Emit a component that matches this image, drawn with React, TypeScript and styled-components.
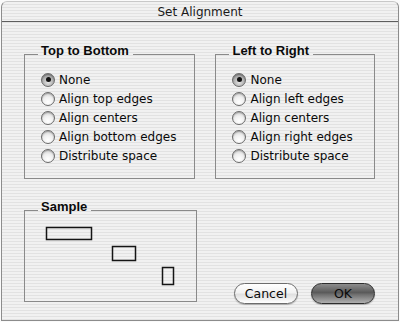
import styled, { createGlobalStyle } from "styled-components";

const GlobalStyle = createGlobalStyle`
  html, body {
    margin: 0;
    padding: 0;
    background: #ffffff;
  }
  body {
    font-family: "DejaVu Sans", "Liberation Sans", sans-serif;
    color: #0a0a0a;
  }
`;

const stripes = `repeating-linear-gradient(
  to bottom,
  #f1f1f1 0px,
  #f1f1f1 2px,
  #e2e2e2 2px,
  #e2e2e2 3px
)`;

const Screen = styled.div`
  width: 400px;
  height: 322px;
  box-sizing: border-box;
  padding: 1px;
  background: #fafafa;
`;

const Window = styled.div`
  height: 100%;
  box-sizing: border-box;
  border: 1px solid #8c8c8c;
  border-top-color: #c8c8c8;
  border-radius: 6px 6px 0 0;
  background: ${stripes};
  display: flex;
  flex-direction: column;
  overflow: hidden;
`;

const TitleBar = styled.div`
  height: 19px;
  flex: none;
  border-bottom: 1px solid #5e5e5e;
  display: flex;
  align-items: center;
  justify-content: center;
  font-size: 12px;
  color: #1a1a1a;
`;

const Body = styled.div`
  flex: 1;
  display: flex;
  flex-direction: column;
  padding: 22px 23px 16px 22px;
  gap: 21px;
`;

const Row = styled.div`
  display: flex;
  align-items: flex-start;
  gap: 20px;
`;

const BottomRow = styled.div`
  display: flex;
  align-items: flex-end;
  justify-content: space-between;
`;

const Group = styled.fieldset<{ $width: number; $height: number; $lift?: number }>`
  margin: 0 0 ${(p) => p.$lift ?? 0}px 0;
  box-sizing: border-box;
  width: ${(p) => p.$width}px;
  height: ${(p) => p.$height}px;
  border: 1px solid #8a8a8a;
  padding: 0;
  min-width: 0;
`;

const Legend = styled.legend`
  font-family: "Liberation Sans", "DejaVu Sans", sans-serif;
  font-weight: bold;
  font-size: 13px;
  line-height: 14px;
  padding: 0 4px 6px 3px;
  margin-left: 13px;
  color: #0a0a0a;
`;

const OptionList = styled.div`
  display: flex;
  flex-direction: column;
  padding: 6px 10px 0 16px;
`;

const Option = styled.label`
  display: flex;
  align-items: center;
  gap: 4px;
  height: 19px;
  font-size: 12px;
  white-space: nowrap;
`;

const Radio = styled.span<{ $checked?: boolean }>`
  width: 14px;
  height: 14px;
  box-sizing: border-box;
  border-radius: 50%;
  border: 1px solid #6a6a6a;
  flex: none;
  display: flex;
  align-items: center;
  justify-content: center;
  background: ${(p) =>
    p.$checked
      ? "radial-gradient(circle at 50% 70%, #e4e4e4 0%, #a9a9a9 60%, #7c7c7c 100%)"
      : "radial-gradient(circle at 50% 75%, #ffffff 0%, #f0f0f0 45%, #c4c4c4 100%)"};
  box-shadow: inset 0 1px 1px rgba(0, 0, 0, 0.25);

  &::after {
    content: "";
    display: ${(p) => (p.$checked ? "block" : "none")};
    width: 5px;
    height: 5px;
    border-radius: 50%;
    background: #111;
  }
`;

const SampleCanvas = styled.svg`
  display: block;
`;

const Buttons = styled.div`
  display: flex;
  gap: 13px;
`;

const Button = styled.button<{ $default?: boolean }>`
  width: 64px;
  height: 21px;
  box-sizing: border-box;
  border-radius: 11px;
  border: 1px solid ${(p) => (p.$default ? "#2e2e2e" : "#6c6c6c")};
  font-family: inherit;
  font-size: 12.5px;
  color: #0a0a0a;
  padding: 0;
  display: flex;
  align-items: center;
  justify-content: center;
  background: ${(p) =>
    p.$default
      ? "linear-gradient(to bottom, #8d8d8d 0%, #5a5a5a 45%, #6e6e6e 55%, #b0b0b0 100%)"
      : "linear-gradient(to bottom, #ffffff 0%, #f2f2f2 45%, #e0e0e0 55%, #ffffff 100%)"};
  box-shadow: 0 1px 1px rgba(0, 0, 0, 0.25);
`;

const topToBottom = [
  "None",
  "Align top edges",
  "Align centers",
  "Align bottom edges",
  "Distribute space",
];

const leftToRight = [
  "None",
  "Align left edges",
  "Align centers",
  "Align right edges",
  "Distribute space",
];

function RadioGroup({
  title,
  options,
  width,
}: {
  title: string;
  options: string[];
  width: number;
}) {
  return (
    <Group $width={width} $height={135}>
      <Legend>{title}</Legend>
      <OptionList>
        {options.map((o, i) => (
          <Option key={o}>
            <Radio $checked={i === 0} />
            {o}
          </Option>
        ))}
      </OptionList>
    </Group>
  );
}

export default function App() {
  return (
    <>
      <GlobalStyle />
      <Screen>
        <Window>
          <TitleBar>Set Alignment</TitleBar>
          <Body>
            <Row>
              <RadioGroup title="Top to Bottom" options={topToBottom} width={173} />
              <RadioGroup title="Left to Right" options={leftToRight} width={161} />
            </Row>
            <BottomRow>
              <Group $width={173} $height={102} $lift={2}>
                <Legend>Sample</Legend>
                <SampleCanvas width="170" height="80">
                  <g fill="none" stroke="#151515" strokeWidth="1.5">
                    <rect x="21.5" y="7.5" width="45" height="12" />
                    <rect x="87.5" y="26.5" width="23" height="14" />
                    <rect x="137.5" y="47.5" width="11" height="17" />
                  </g>
                </SampleCanvas>
              </Group>
              <Buttons>
                <Button>Cancel</Button>
                <Button $default>OK</Button>
              </Buttons>
            </BottomRow>
          </Body>
        </Window>
      </Screen>
    </>
  );
}
